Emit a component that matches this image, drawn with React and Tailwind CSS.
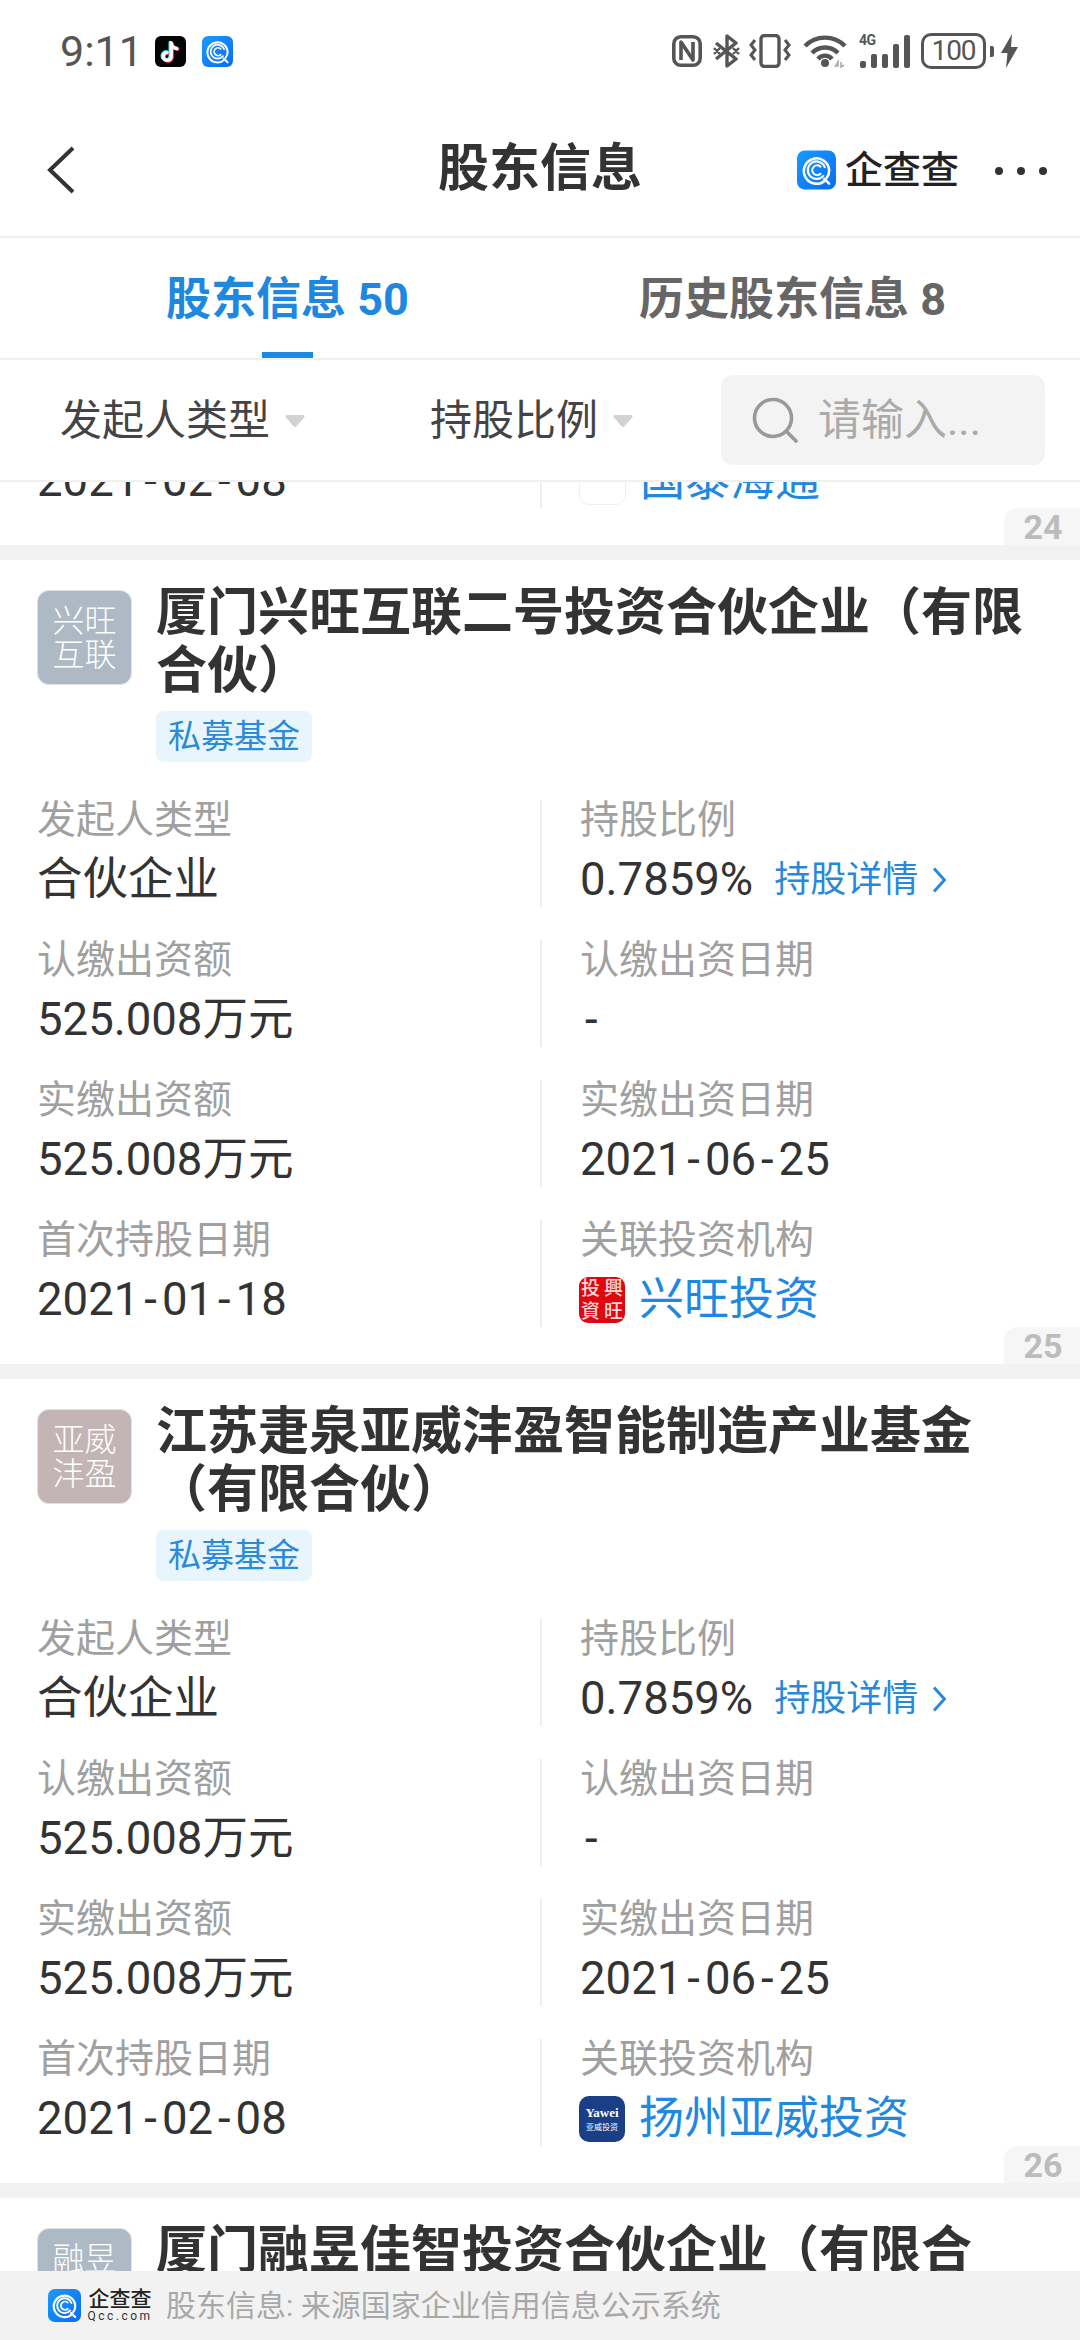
import React from 'react';

const QccIcon = ({ id, className }) => (
  <svg viewBox="0 0 40 40" className={className}>
    <defs>
      <linearGradient id={id} x1="0" y1="0" x2="1" y2="1">
        <stop offset="0" stopColor="#1a9bff" />
        <stop offset="1" stopColor="#0a6cf0" />
      </linearGradient>
    </defs>
    <rect width="40" height="40" rx="8" fill={`url(#${id})`} />
    <g fill="none" stroke="#fff" strokeLinecap="round">
      <path d="M29 30.5A13 13 0 1 1 33 20.5c0 3-1 5.5-2.5 7.5" strokeWidth="2.6" />
      <path d="M27 26A9 9 0 1 1 28.5 17" strokeWidth="2.2" />
      <path d="M24 16.5A5 5 0 1 0 24 24" strokeWidth="2.2" />
      <path d="M28 29l5 5" strokeWidth="2.6" />
    </g>
  </svg>
);

const TikTokIcon = () => (
  <svg viewBox="0 0 31 31" className="w-[31px] h-[31px]">
    <rect width="31" height="31" rx="6" fill="#050505" />
    <g fill="none" strokeWidth="3.4" strokeLinecap="round">
      <path d="M16.2 7v13.4a4 4 0 1 1-4-4M16.2 7c.4 3 2.6 5.2 5.6 5.5" stroke="#25f4ee" transform="translate(-1 -.6)" />
      <path d="M16.2 7v13.4a4 4 0 1 1-4-4M16.2 7c.4 3 2.6 5.2 5.6 5.5" stroke="#fe2c55" transform="translate(1 .7)" />
      <path d="M16.2 7v13.4a4 4 0 1 1-4-4M16.2 7c.4 3 2.6 5.2 5.6 5.5" stroke="#fff" />
    </g>
  </svg>
);

const StatusIcons = () => (
  <div className="flex items-center text-[#555]">
    {/* nfc */}
    <svg viewBox="0 0 30 32" className="w-[30px] h-[32px]" fill="none" stroke="#555" strokeWidth="3.6">
      <rect x="1.8" y="1.8" width="26.4" height="28.4" rx="7" />
      <path d="M9 25V7l12 18V7" strokeLinejoin="round" />
    </svg>
    {/* bluetooth */}
    <svg viewBox="0 0 27 34" className="w-[27px] h-[34px] ml-[11px]" fill="none" stroke="#555" strokeWidth="3.4">
      <path d="M3 9l20 16-9 7V2l9 7L3 25" strokeLinejoin="round" />
      <path d="M1 14l6 6M1 20l6-6M20 14l6 6M20 20l6-6" strokeWidth="2.4" />
    </svg>
    {/* vibrate */}
    <svg viewBox="0 0 42 34" className="w-[42px] h-[34px] ml-[9px]" fill="none" stroke="#555" strokeWidth="3">
      <rect x="12" y="1.5" width="18" height="31" rx="3.5" strokeWidth="3.4" />
      <path d="M6 6L2 11l4 5-4 5 4 5" />
      <path d="M36 6l4 5-4 5 4 5-4 5" />
    </svg>
    {/* wifi */}
    <svg viewBox="0 0 46 34" className="w-[46px] h-[34px] ml-[11px]" fill="none" stroke="#555" strokeWidth="4.4">
      <path d="M3 12a28 28 0 0 1 40 0" />
      <path d="M10 19a18 18 0 0 1 26 0" />
      <path d="M16 25a9 9 0 0 1 14 0" />
      <circle cx="23" cy="29" r="4" fill="#555" stroke="none" />
      <path d="M33 33l3-5v5M39 28v5l3-2" strokeWidth="1.6" stroke="#aaa" />
    </svg>
    {/* 4g + signal */}
    <div className="relative w-[51px] h-[34px] ml-[11px]">
      <span className="absolute left-0 top-[-1px] text-[14px] leading-[14px] font-bold tracking-[-0.5px]">4G</span>
      <svg viewBox="0 0 51 34" className="w-[51px] h-[34px]" fill="#555">
        <rect x="1" y="27" width="6" height="7" rx="2" />
        <rect x="12" y="20" width="6" height="14" rx="2" />
        <rect x="23" y="20" width="6" height="14" rx="2" />
        <rect x="34" y="10" width="6" height="24" rx="2" />
        <rect x="45" y="1" width="6" height="33" rx="2" />
      </svg>
    </div>
    {/* battery */}
    <div className="flex items-center justify-center w-[65px] h-[36px] ml-[11px] border-[3px] border-[#555] rounded-[10px] text-[28px] leading-none tracking-[-1px]">
      100
    </div>
    <div className="w-[4px] h-[11px] ml-[4px] bg-[#555] rounded-r-[2px]" />
    <svg viewBox="0 0 17 34" className="w-[17px] h-[34px] ml-[7px]" fill="#555">
      <path d="M11 0L0 19h6.5L5 34l12-21h-7z" />
    </svg>
  </div>
);

const Caret = () => (
  <svg viewBox="0 0 20 12" className="w-[20px] h-[12px] ml-[15px]">
    <path d="M2 0h16a1.5 1.5 0 0 1 1.2 2.4l-8 9a1.6 1.6 0 0 1-2.4 0l-8-9A1.5 1.5 0 0 1 2 0z" fill="#d2d2d2" />
  </svg>
);

// the hyphen in the screenshot is wider than Roboto's, so pad it
const Dashed = ({ text }) => (
  <span>
    {text.split('-').map((part, i) => (
      <React.Fragment key={i}>
        {i > 0 && <span className="px-[5px]">-</span>}
        {part}
      </React.Fragment>
    ))}
  </span>
);

const Field = ({ label, children, right }) => (
  <div className={`h-[107px] ${right ? 'pl-[38px] border-l-2 border-[#eeeeee]' : ''}`}>
    <div className="h-[39px] pt-[1px] text-[39px] leading-[38px] text-[#a0a0a0]">{label}</div>
    <div className="mt-[14px] h-[54px] flex items-center text-[45.5px] leading-[54px] text-[#333]">{children}</div>
  </div>
);

const Detail = () => (
  <>
    <span>0.7859%</span>
    <span className="ml-[21px] text-[36px] text-[#2a88d8]">持股详情</span>
    <svg viewBox="0 0 14 26" className="w-[14px] h-[26px] ml-[14px]" fill="none" stroke="#2a88d8" strokeWidth="3">
      <path d="M2 1.5L12.5 13 2 24.5" />
    </svg>
  </>
);

const Link = ({ icon, text }) => (
  <span className="flex items-center -ml-px">
    {icon}
    <span className="ml-[14px] text-[45px] text-[#1f88e0]">{text}</span>
  </span>
);

const XingwangLogo = () => (
  <span className="grid grid-cols-2 grid-rows-2 place-items-center w-[46px] h-[46px] rounded-[9px] bg-[#e2060f] text-[#ffd9d9] text-[19px] leading-[20px] font-medium">
    <span>投</span>
    <span>興</span>
    <span>資</span>
    <span>旺</span>
  </span>
);

const YaweiLogo = () => (
  <span className="flex flex-col items-center justify-center w-[46px] h-[46px] rounded-[10px] bg-[#1a3f86] text-white">
    <span className="text-[13px] leading-[14px] font-bold font-['Liberation_Serif',serif]">Yawei</span>
    <span className="mt-[3px] text-[8px] leading-[9px]">亚威投资</span>
  </span>
);

const GuotaiLogo = () => (
  <span className="w-[47px] h-[47px] rounded-[10px] border border-[#f0f0f0] bg-white" />
);

const PageBadge = ({ num }) => (
  <div className="absolute right-0 bottom-0 flex items-center justify-center w-[76px] h-[37px] pl-[2px] rounded-tl-[14px] bg-[#f6f6f6] text-[34px] leading-none font-bold text-[#bcbcbc]">
    {num}
  </div>
);

const Card = ({ name, logoBg, logoText, title, inst, num }) => (
  <div className="relative shrink-0 bg-white pt-[24px] pb-[37px] mb-[15px]">
    <div className="flex pl-[37px] pr-[40px]">
      <div className={`shrink-0 mt-[6px] w-[95px] h-[95px] rounded-[12px] border border-[#dfe3e6] flex items-center justify-center text-center text-[32px] leading-[34px] font-light text-white ${logoBg}`}>
        <div className="w-[68px]">{logoText}</div>
      </div>
      <div className="ml-[24px] min-w-0">
        <div className="text-[51px] leading-[58px] font-bold text-[#333]">{title}</div>
        {name && (
          <div className="mt-[11px] inline-flex items-center h-[51px] px-[12px] rounded-[8px] bg-[#e8f5fd] text-[33px] text-[#2a8bd8]">
            {name}
          </div>
        )}
      </div>
    </div>
    <div className="mt-[38px] pl-[37px] grid grid-cols-[503px_1fr] gap-y-[33px]">
      <Field label="发起人类型">合伙企业</Field>
      <Field label="持股比例" right><Detail /></Field>
      <Field label="认缴出资额">525.008万元</Field>
      <Field label="认缴出资日期" right><Dashed text="-" /></Field>
      <Field label="实缴出资额">525.008万元</Field>
      <Field label="实缴出资日期" right><Dashed text="2021-06-25" /></Field>
      <Field label="首次持股日期"><Dashed text={inst.date} /></Field>
      <Field label="关联投资机构" right><Link icon={inst.icon} text={inst.text} /></Field>
    </div>
    <PageBadge num={num} />
  </div>
);

export default function App() {
  return (
    <div className="relative h-[2340px] w-[1080px] flex flex-col overflow-hidden bg-white font-[Roboto,'Noto_Sans_CJK_SC',sans-serif]">
      {/* status bar */}
      <div className="shrink-0 h-[102px] flex items-center justify-between pl-[60px] pr-[62px]">
        <div className="flex items-center">
          <span className="text-[43px] leading-[50px] text-[#555]">9:11</span>
          <span className="ml-[12px]"><TikTokIcon /></span>
          <span className="ml-[16px]"><QccIcon id="qcc-status" className="w-[31px] h-[31px]" /></span>
        </div>
        <StatusIcons />
      </div>

      {/* nav */}
      <div className="relative shrink-0 h-[136px] flex items-center justify-center border-b-2 border-[#f0f0f0]">
        <svg viewBox="0 0 28 48" className="absolute left-[47px] top-[44px] w-[28px] h-[48px]" fill="none" stroke="#333" strokeWidth="4">
          <path d="M26 2L3 24l23 22" />
        </svg>
        <div className="text-[51px] leading-[60px] font-bold text-[#333]">股东信息</div>
        <div className="absolute left-[797px] top-[48px] flex items-center">
          <QccIcon id="qcc-nav" className="w-[39px] h-[40px]" />
          <span className="ml-[9px] text-[38px] leading-[40px] font-medium text-[#222]">企查查</span>
        </div>
        <div className="absolute right-[33px] top-[65px] flex gap-[14px]">
          <span className="w-[8px] h-[8px] rounded-full bg-[#333]" />
          <span className="w-[8px] h-[8px] rounded-full bg-[#333]" />
          <span className="w-[8px] h-[8px] rounded-full bg-[#333]" />
        </div>
      </div>

      {/* tabs */}
      <div className="shrink-0 h-[122px] flex px-[35px] border-b-2 border-[#f0f0f0]">
        <div className="relative flex-1 flex justify-center pt-[32px] text-[45px] leading-[60px] font-bold text-[#1e88e0]">
          股东信息 50
          <div className="absolute bottom-0 left-[227px] w-[51px] h-[6px] bg-[#1e88e0]" />
        </div>
        <div className="flex-1 flex justify-center pt-[32px] text-[45px] leading-[60px] font-bold text-[#666]">
          历史股东信息 8
        </div>
      </div>

      {/* filters */}
      <div className="shrink-0 h-[122px] flex items-center pl-[60px] border-b-2 border-[#f0f0f0]">
        <div className="w-[370px] flex items-center pt-[1px] text-[42px] leading-[50px] text-[#444]">
          <span>发起人类型</span>
          <Caret />
        </div>
        <div className="w-[291px] flex items-center pt-[1px] text-[42px] leading-[50px] text-[#444]">
          <span>持股比例</span>
          <Caret />
        </div>
        <div className="w-[324px] h-[90px] rounded-[12px] bg-[#f3f3f3] flex items-center pl-[31px]">
          <svg viewBox="0 0 46 46" className="w-[46px] h-[46px]" fill="none" stroke="#999" strokeWidth="3.6">
            <circle cx="21" cy="21" r="18.5" />
            <path d="M35 35l9 9" strokeLinecap="round" />
          </svg>
          <span className="ml-[20px] text-[43px] leading-[50px] text-[#aaa]">请输入...</span>
        </div>
      </div>

      {/* list */}
      <div className="flex-1 min-h-0 flex flex-col overflow-hidden bg-[#f2f2f2]">
        {/* card 24 is scrolled away, only its last row still shows */}
        <div className="relative shrink-0 h-[63px] mb-[15px] flex flex-col justify-end overflow-hidden bg-white pb-[37px] pl-[37px]">
          <div className="shrink-0 grid grid-cols-[503px_1fr]">
            <Field><Dashed text="2021-02-08" /></Field>
            <Field right><Link icon={<GuotaiLogo />} text="国泰海通" /></Field>
          </div>
          <PageBadge num="24" />
        </div>

        <Card
          name="私募基金"
          logoBg="bg-[#adb9c4]"
          logoText="兴旺互联"
          title="厦门兴旺互联二号投资合伙企业（有限合伙）"
          inst={{ date: '2021-01-18', icon: <XingwangLogo />, text: '兴旺投资' }}
          num="25"
        />
        <Card
          name="私募基金"
          logoBg="bg-[#c3b5b5]"
          logoText="亚威沣盈"
          title="江苏疌泉亚威沣盈智能制造产业基金（有限合伙）"
          inst={{ date: '2021-02-08', icon: <YaweiLogo />, text: '扬州亚威投资' }}
          num="26"
        />
        <div className="shrink-0 bg-white pt-[24px] pl-[37px] pr-[40px] flex h-[200px]">
          <div className="shrink-0 mt-[6px] w-[95px] h-[95px] rounded-[12px] border border-[#dfe3e6] bg-[#adb9c4] flex items-center justify-center text-center text-[32px] leading-[34px] font-light text-white">
            <div className="w-[68px]">融昱佳智</div>
          </div>
          <div className="ml-[24px] min-w-0 text-[51px] leading-[58px] font-bold text-[#333]">
            厦门融昱佳智投资合伙企业（有限合伙）
          </div>
        </div>
      </div>

      {/* footer */}
      <div className="relative shrink-0 h-[69px] flex items-center pl-[48px] bg-[#f2f2f2]">
        <QccIcon id="qcc-foot" className="w-[33px] h-[33px]" />
        <div className="ml-[6px] w-[66px] flex flex-col items-center">
          <span className="text-[21px] leading-[21px] font-medium text-[#222]">企查查</span>
          <span className="text-[12px] leading-[12px] tracking-[2.5px] text-[#333]">Qcc.com</span>
        </div>
        <span className="ml-[13px] text-[30px] leading-[40px] text-[#a8a8a8]">股东信息: 来源国家企业信用信息公示系统</span>
      </div>
    </div>
  );
}
